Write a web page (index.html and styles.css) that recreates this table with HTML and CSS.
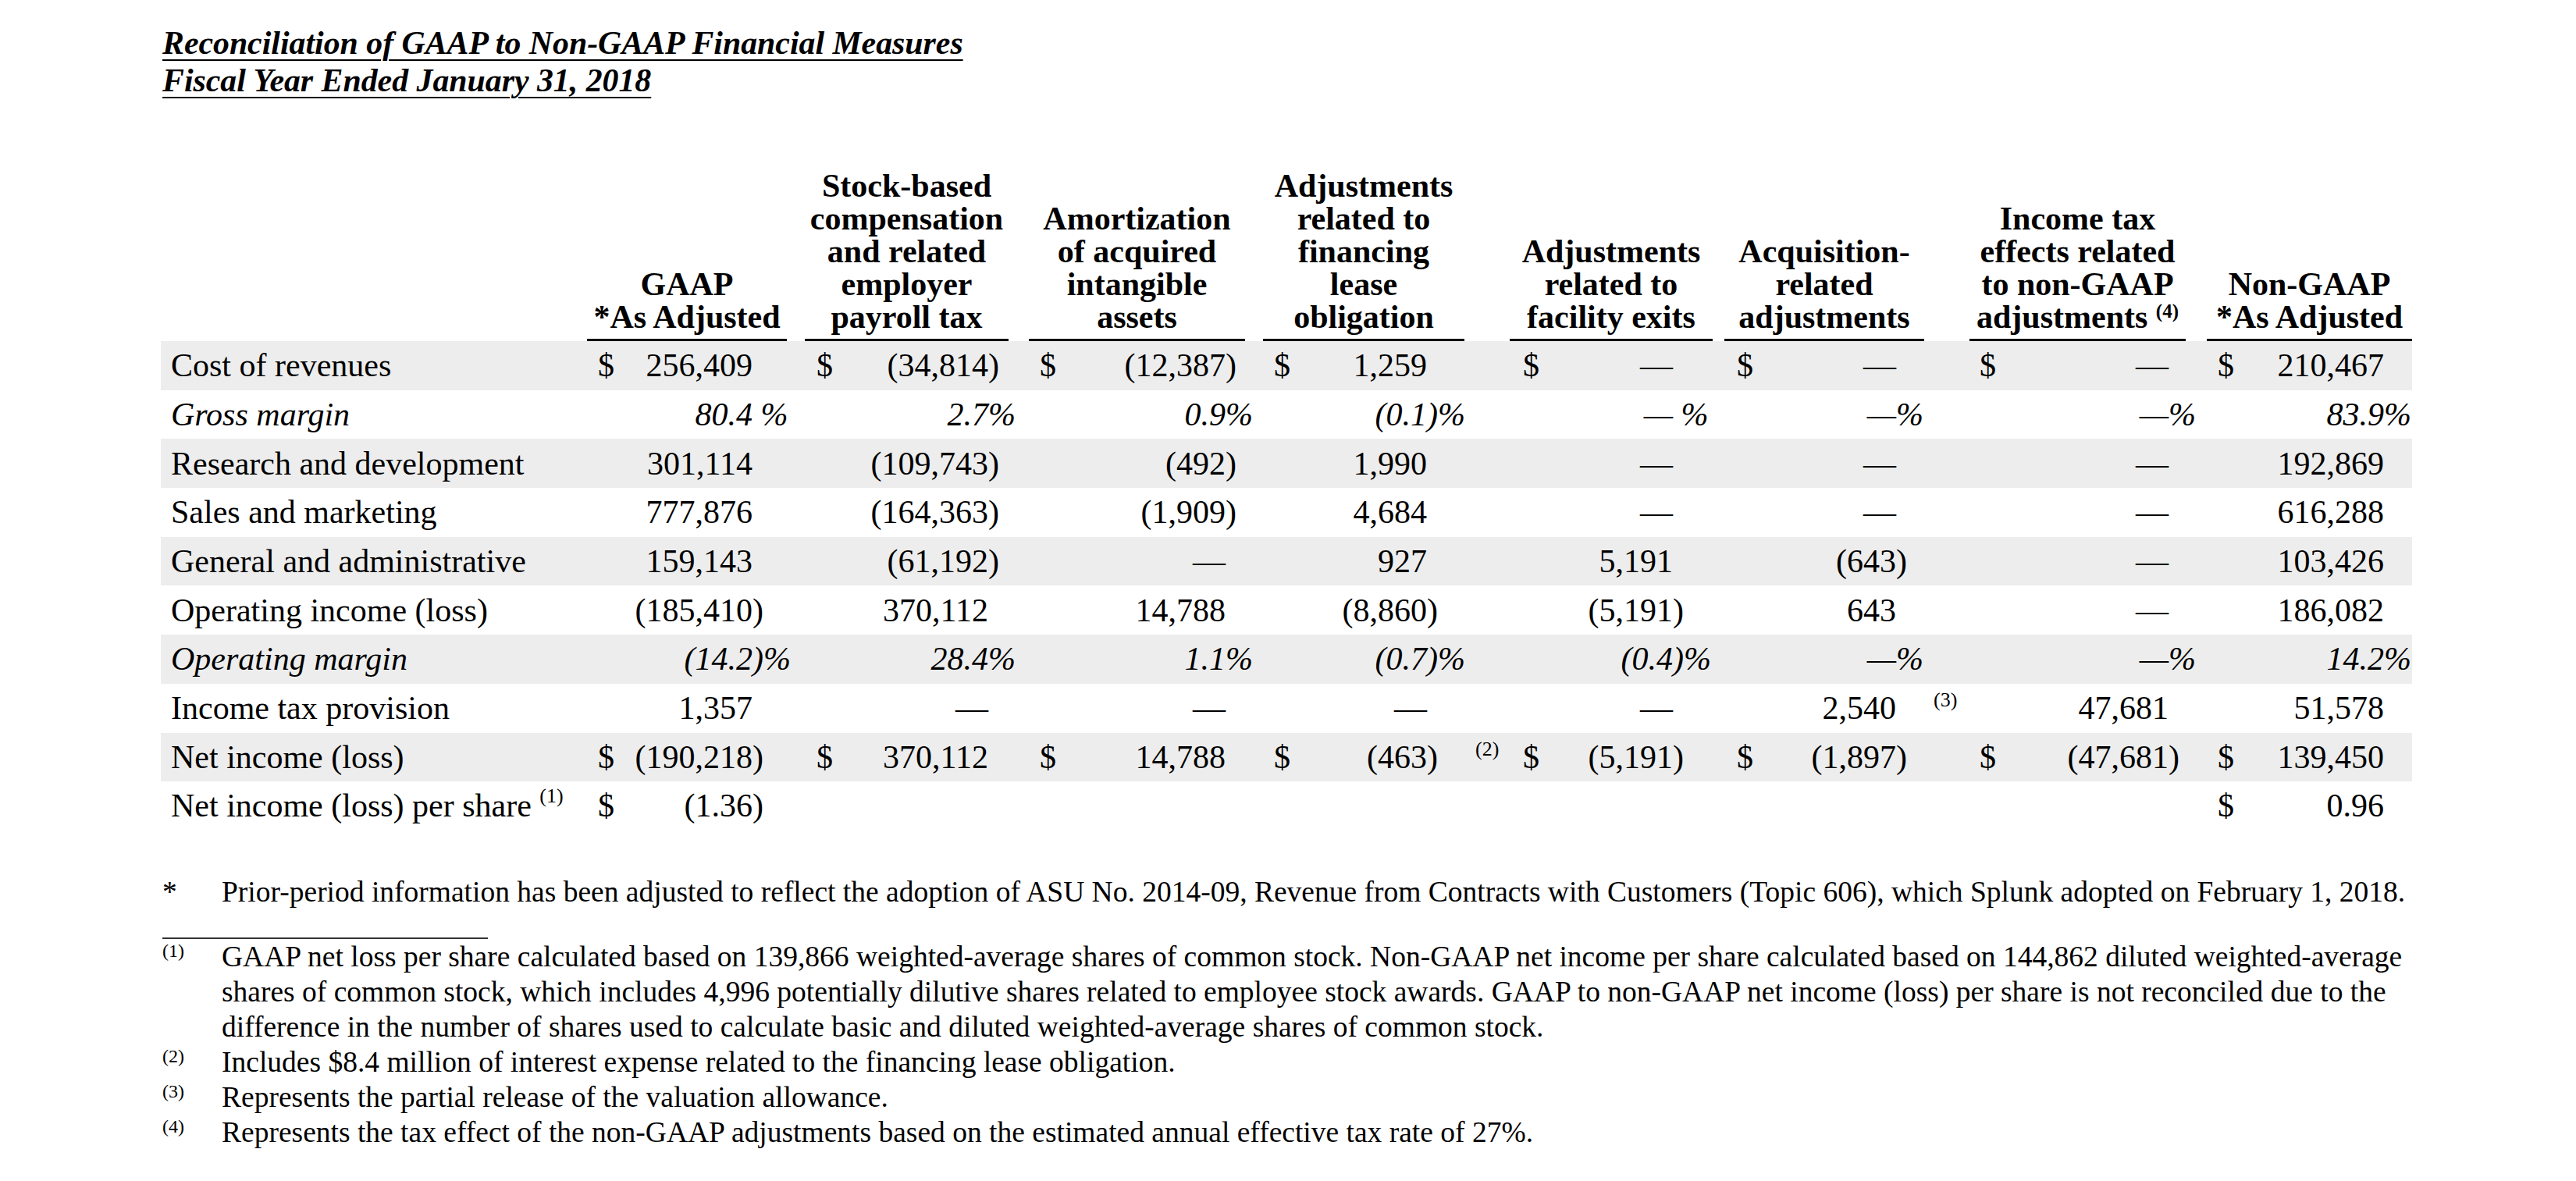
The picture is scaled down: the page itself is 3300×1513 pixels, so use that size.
FILE: index.html
```html
<!DOCTYPE html>
<html lang="en">
<head>
<meta charset="utf-8">
<title>Reconciliation of GAAP to Non-GAAP Financial Measures</title>
<link rel="stylesheet" href="styles.css">
</head>
<body>
<div class="page">
  <div class="title">
    <div class="tl"><span>Reconciliation of GAAP to Non-GAAP Financial Measures</span></div>
    <div class="tl"><span>Fiscal Year Ended January 31, 2018</span></div>
  </div>

  <div class="tbl">
    <div class="row head">
      <div class="h c1">GAAP<br>*As Adjusted</div>
      <div class="h c2">Stock-based<br>compensation<br>and related<br>employer<br>payroll tax</div>
      <div class="h c3">Amortization<br>of acquired<br>intangible<br>assets</div>
      <div class="h c4">Adjustments<br>related to<br>financing<br>lease<br>obligation</div>
      <div class="h c5">Adjustments<br>related to<br>facility exits</div>
      <div class="h c6">Acquisition-<br>related<br>adjustments</div>
      <div class="h c7">Income tax<br>effects related<br>to non-GAAP<br>adjustments <sup class="hs">(4)</sup></div>
      <div class="h c8">Non-GAAP<br>*As Adjusted</div>
    </div>

    <div class="row band">
      <div class="lbl">Cost of revenues</div>
      <div class="v c1"><span class="d">$</span><span class="n">256,409</span><span class="s"></span></div>
      <div class="v c2"><span class="d">$</span><span class="n">(34,814</span><span class="s">)</span></div>
      <div class="v c3"><span class="d">$</span><span class="n">(12,387</span><span class="s">)</span></div>
      <div class="v c4"><span class="d">$</span><span class="n">1,259</span><span class="s"></span></div>
      <div class="v c5"><span class="d">$</span><span class="n">—</span><span class="s"></span></div>
      <div class="v c6"><span class="d">$</span><span class="n">—</span><span class="s"></span></div>
      <div class="v c7"><span class="d">$</span><span class="n">—</span><span class="s"></span></div>
      <div class="v c8"><span class="d">$</span><span class="n">210,467</span><span class="s"></span></div>
    </div>

    <div class="row it">
      <div class="lbl">Gross margin</div>
      <div class="v c1"><span class="d"></span><span class="n">80.4</span><span class="s">&nbsp;%</span></div>
      <div class="v c2"><span class="d"></span><span class="n">2.7</span><span class="s">%</span></div>
      <div class="v c3"><span class="d"></span><span class="n">0.9</span><span class="s">%</span></div>
      <div class="v c4"><span class="d"></span><span class="n">(0.1</span><span class="s">)%</span></div>
      <div class="v c5"><span class="d"></span><span class="n">—</span><span class="s">&nbsp;%</span></div>
      <div class="v c6"><span class="d"></span><span class="n">—</span><span class="s">%</span></div>
      <div class="v c7"><span class="d"></span><span class="n">—</span><span class="s">%</span></div>
      <div class="v c8"><span class="d"></span><span class="n">83.9</span><span class="s">%</span></div>
    </div>

    <div class="row band">
      <div class="lbl">Research and development</div>
      <div class="v c1"><span class="d"></span><span class="n">301,114</span><span class="s"></span></div>
      <div class="v c2"><span class="d"></span><span class="n">(109,743</span><span class="s">)</span></div>
      <div class="v c3"><span class="d"></span><span class="n">(492</span><span class="s">)</span></div>
      <div class="v c4"><span class="d"></span><span class="n">1,990</span><span class="s"></span></div>
      <div class="v c5"><span class="d"></span><span class="n">—</span><span class="s"></span></div>
      <div class="v c6"><span class="d"></span><span class="n">—</span><span class="s"></span></div>
      <div class="v c7"><span class="d"></span><span class="n">—</span><span class="s"></span></div>
      <div class="v c8"><span class="d"></span><span class="n">192,869</span><span class="s"></span></div>
    </div>

    <div class="row">
      <div class="lbl">Sales and marketing</div>
      <div class="v c1"><span class="d"></span><span class="n">777,876</span><span class="s"></span></div>
      <div class="v c2"><span class="d"></span><span class="n">(164,363</span><span class="s">)</span></div>
      <div class="v c3"><span class="d"></span><span class="n">(1,909</span><span class="s">)</span></div>
      <div class="v c4"><span class="d"></span><span class="n">4,684</span><span class="s"></span></div>
      <div class="v c5"><span class="d"></span><span class="n">—</span><span class="s"></span></div>
      <div class="v c6"><span class="d"></span><span class="n">—</span><span class="s"></span></div>
      <div class="v c7"><span class="d"></span><span class="n">—</span><span class="s"></span></div>
      <div class="v c8"><span class="d"></span><span class="n">616,288</span><span class="s"></span></div>
    </div>

    <div class="row band">
      <div class="lbl">General and administrative</div>
      <div class="v c1"><span class="d"></span><span class="n">159,143</span><span class="s"></span></div>
      <div class="v c2"><span class="d"></span><span class="n">(61,192</span><span class="s">)</span></div>
      <div class="v c3"><span class="d"></span><span class="n">—</span><span class="s"></span></div>
      <div class="v c4"><span class="d"></span><span class="n">927</span><span class="s"></span></div>
      <div class="v c5"><span class="d"></span><span class="n">5,191</span><span class="s"></span></div>
      <div class="v c6"><span class="d"></span><span class="n">(643</span><span class="s">)</span></div>
      <div class="v c7"><span class="d"></span><span class="n">—</span><span class="s"></span></div>
      <div class="v c8"><span class="d"></span><span class="n">103,426</span><span class="s"></span></div>
    </div>

    <div class="row">
      <div class="lbl">Operating income (loss)</div>
      <div class="v c1"><span class="d"></span><span class="n">(185,410</span><span class="s">)</span></div>
      <div class="v c2"><span class="d"></span><span class="n">370,112</span><span class="s"></span></div>
      <div class="v c3"><span class="d"></span><span class="n">14,788</span><span class="s"></span></div>
      <div class="v c4"><span class="d"></span><span class="n">(8,860</span><span class="s">)</span></div>
      <div class="v c5"><span class="d"></span><span class="n">(5,191</span><span class="s">)</span></div>
      <div class="v c6"><span class="d"></span><span class="n">643</span><span class="s"></span></div>
      <div class="v c7"><span class="d"></span><span class="n">—</span><span class="s"></span></div>
      <div class="v c8"><span class="d"></span><span class="n">186,082</span><span class="s"></span></div>
    </div>

    <div class="row band it">
      <div class="lbl">Operating margin</div>
      <div class="v c1"><span class="d"></span><span class="n">(14.2</span><span class="s">)%</span></div>
      <div class="v c2"><span class="d"></span><span class="n">28.4</span><span class="s">%</span></div>
      <div class="v c3"><span class="d"></span><span class="n">1.1</span><span class="s">%</span></div>
      <div class="v c4"><span class="d"></span><span class="n">(0.7</span><span class="s">)%</span></div>
      <div class="v c5"><span class="d"></span><span class="n">(0.4</span><span class="s">)%</span></div>
      <div class="v c6"><span class="d"></span><span class="n">—</span><span class="s">%</span></div>
      <div class="v c7"><span class="d"></span><span class="n">—</span><span class="s">%</span></div>
      <div class="v c8"><span class="d"></span><span class="n">14.2</span><span class="s">%</span></div>
    </div>

    <div class="row">
      <div class="lbl">Income tax provision</div>
      <div class="v c1"><span class="d"></span><span class="n">1,357</span><span class="s"></span></div>
      <div class="v c2"><span class="d"></span><span class="n">—</span><span class="s"></span></div>
      <div class="v c3"><span class="d"></span><span class="n">—</span><span class="s"></span></div>
      <div class="v c4"><span class="d"></span><span class="n">—</span><span class="s"></span></div>
      <div class="v c5"><span class="d"></span><span class="n">—</span><span class="s"></span></div>
      <div class="v c6"><span class="d"></span><span class="n">2,540</span><span class="s"></span></div>
      <div class="fn g6"><sup>(3)</sup></div>
      <div class="v c7"><span class="d"></span><span class="n">47,681</span><span class="s"></span></div>
      <div class="v c8"><span class="d"></span><span class="n">51,578</span><span class="s"></span></div>
    </div>

    <div class="row band">
      <div class="lbl">Net income (loss)</div>
      <div class="v c1"><span class="d">$</span><span class="n">(190,218</span><span class="s">)</span></div>
      <div class="v c2"><span class="d">$</span><span class="n">370,112</span><span class="s"></span></div>
      <div class="v c3"><span class="d">$</span><span class="n">14,788</span><span class="s"></span></div>
      <div class="v c4"><span class="d">$</span><span class="n">(463</span><span class="s">)</span></div>
      <div class="fn g4"><sup>(2)</sup></div>
      <div class="v c5"><span class="d">$</span><span class="n">(5,191</span><span class="s">)</span></div>
      <div class="v c6"><span class="d">$</span><span class="n">(1,897</span><span class="s">)</span></div>
      <div class="v c7"><span class="d">$</span><span class="n">(47,681</span><span class="s">)</span></div>
      <div class="v c8"><span class="d">$</span><span class="n">139,450</span><span class="s"></span></div>
    </div>

    <div class="row">
      <div class="lbl">Net income (loss) per share <sup class="ls">(1)</sup></div>
      <div class="v c1"><span class="d">$</span><span class="n">(1.36</span><span class="s">)</span></div>
      <div class="v c8"><span class="d">$</span><span class="n">0.96</span><span class="s"></span></div>
    </div>
  </div>

  <div class="notes">
    <div class="note star"><span class="mk">*</span><span class="tx">Prior-period information has been adjusted to reflect the adoption of ASU No. 2014-09, Revenue from Contracts with Customers (Topic 606), which Splunk adopted on February 1, 2018.</span></div>
    <div class="rule"></div>
    <div class="note"><span class="mk"><sup>(1)</sup></span><span class="tx">GAAP net loss per share calculated based on 139,866 weighted-average shares of common stock. Non-GAAP net income per share calculated based on 144,862 diluted weighted-average shares of common stock, which includes 4,996 potentially dilutive shares related to employee stock awards. GAAP to non-GAAP net income (loss) per share is not reconciled due to the difference in the number of shares used to calculate basic and diluted weighted-average shares of common stock.</span></div>
    <div class="note"><span class="mk"><sup>(2)</sup></span><span class="tx">Includes $8.4 million of interest expense related to the financing lease obligation.</span></div>
    <div class="note"><span class="mk"><sup>(3)</sup></span><span class="tx">Represents the partial release of the valuation allowance.</span></div>
    <div class="note"><span class="mk"><sup>(4)</sup></span><span class="tx">Represents the tax effect of the non-GAAP adjustments based on the estimated annual effective tax rate of 27%.</span></div>
  </div>
</div>
</body>
</html>
```

FILE: styles.css
```css
* { box-sizing: border-box; }
html, body { margin: 0; padding: 0; background: #ffffff; }
body {
  font-family: "Liberation Serif", "Times New Roman", serif;
  color: #000;
  font-size: 42px;
}
.page {
  width: 3300px;
  padding: 31px 0 0 206px;
}

/* Title */
.title { padding-left: 2px; }
.tl {
  font-weight: bold;
  font-style: italic;
  font-size: 41.8px;
  line-height: 48px;
}
.tl span {
  text-decoration: underline;
  text-decoration-thickness: 2px;
  text-underline-offset: 7px;
}

/* Table */
.tbl { margin-top: 90px; width: 2884px; }
.row {
  display: grid;
  grid-template-columns: 546px 256px 23px 261px 26px 277px 23px 258px 58px 260px 15px 256px 58px 277px 27px 263px;
  height: 62.7px;
  align-items: center;
}
.row.band { background: #ededed; }
.row.head { height: auto; align-items: end; }
.row.it { font-style: italic; }

.c1 { grid-column: 2; --pl: 14px; --pr: 44px; }
.c2 { grid-column: 4; --pl: 15px; --pr: 26px; }
.c3 { grid-column: 6; --pl: 14px; --pr: 25px; }
.c4 { grid-column: 8; --pl: 14px; --pr: 48px; }
.c5 { grid-column: 10; --pl: 17px; --pr: 51px; }
.c6 { grid-column: 12; --pl: 16px; --pr: 36px; }
.c7 { grid-column: 14; --pl: 13px; --pr: 22px; }
.c8 { grid-column: 16; --pl: 14px; --pr: 36px; }
.g4 { grid-column: 9; }
.g6 { grid-column: 13; }

.lbl {
  grid-column: 1;
  padding-left: 13px;
  white-space: nowrap;
  line-height: 1.2;
}
.ls {
  font-size: 26px;
  vertical-align: 18px;
  line-height: 0;
  font-style: normal;
}

.h {
  font-weight: bold;
  text-align: center;
  line-height: 42px;
  padding-bottom: 7px;
  border-bottom: 3px solid #000;
  white-space: nowrap;
}
.hs {
  font-size: 25px;
  vertical-align: 13px;
  line-height: 0;
}

.v {
  display: grid;
  grid-template-columns: auto 1fr var(--pr);
  padding-left: var(--pl);
  line-height: 1.2;
  white-space: nowrap;
}
.v .d { font-style: normal; }
.v .n { text-align: right; }
.v .s { text-align: left; }

.fn {
  line-height: 1.2;
  white-space: nowrap;
}
.g4 { padding-left: 14px; }
.g6 { padding-left: 12px; }
.fn sup {
  font-size: 26px;
  vertical-align: 16px;
  line-height: 0;
}

/* Notes */
.notes {
  margin-top: 56px;
  font-size: 37.5px;
  line-height: 45px;
  padding-left: 2px;
}
.note {
  display: grid;
  grid-template-columns: 76px 2810px;
}
.note .mk { white-space: nowrap; }
.note .mk sup {
  font-size: 24px;
  vertical-align: 12px;
  line-height: 0;
}
.rule {
  margin-top: 36px;
  width: 417px;
  height: 2px;
  background: #333;
}
```
